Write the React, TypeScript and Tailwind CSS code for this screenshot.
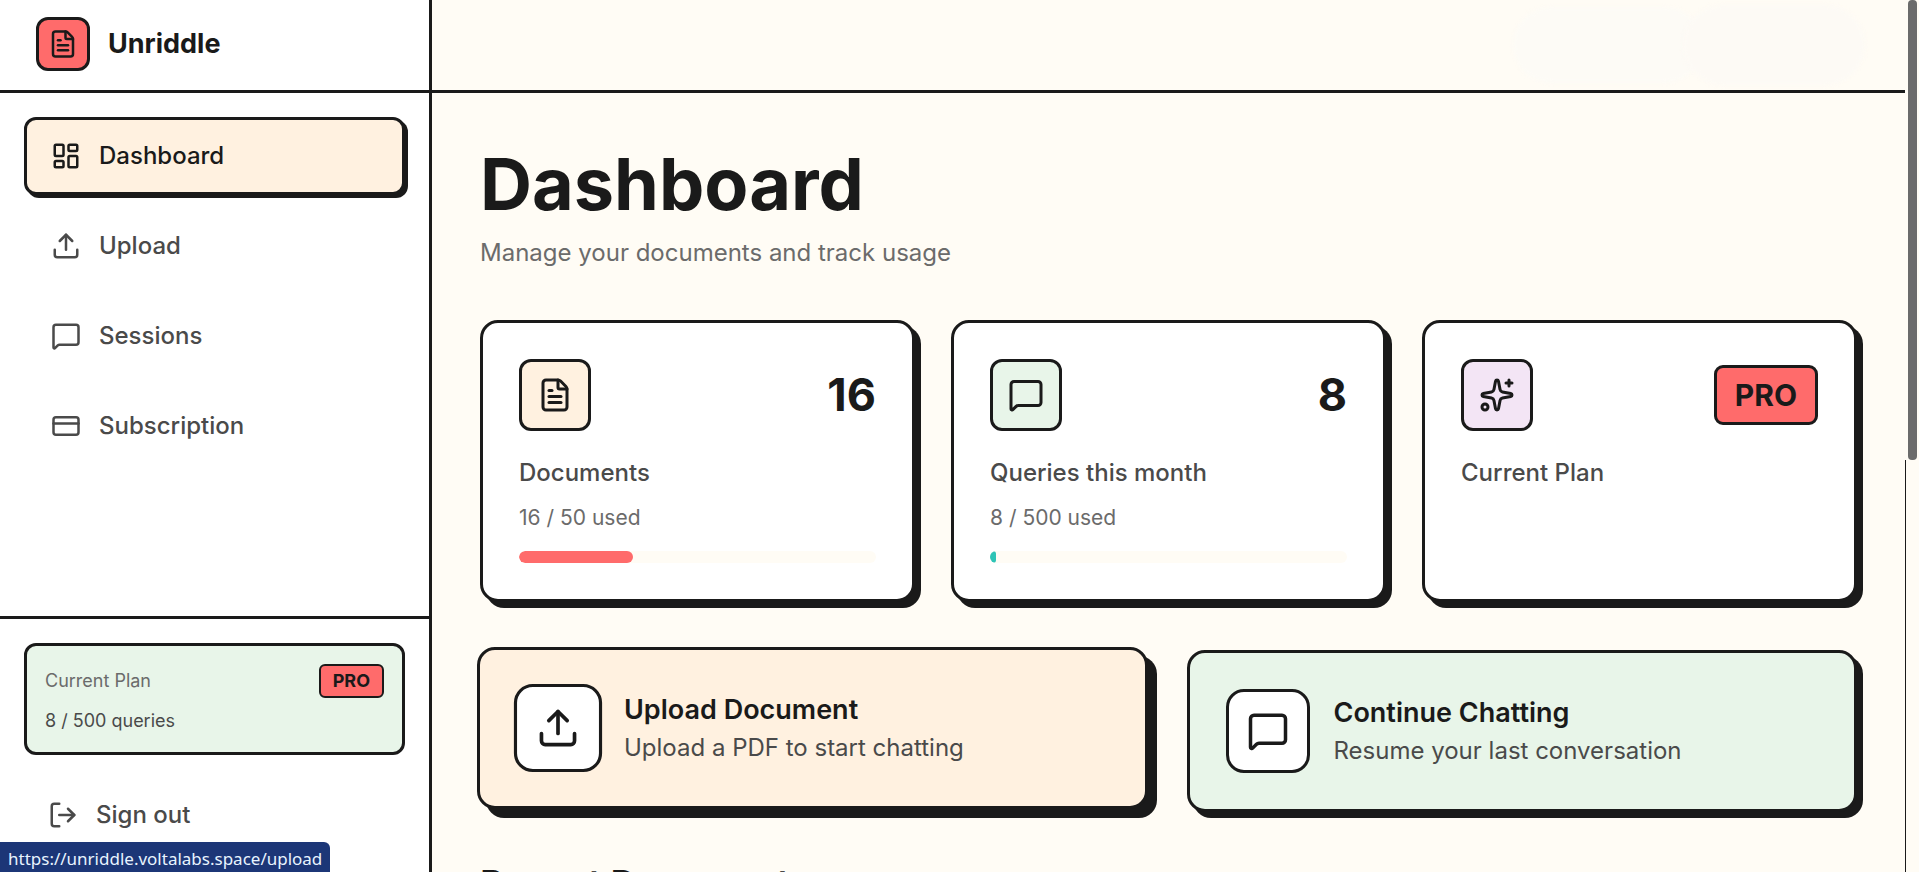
import { FC, ReactNode } from "react";
import {
  CreditCard,
  FileText,
  LayoutDashboard,
  LogOut,
  LucideIcon,
  MessageSquare,
  Sparkles,
  Upload,
} from "lucide-react";
import clsx from "clsx";

const navItems: { label: string; href: string; icon: LucideIcon; active?: boolean }[] = [
  { label: "Dashboard", href: "#dashboard", icon: LayoutDashboard, active: true },
  { label: "Upload", href: "#upload", icon: Upload },
  { label: "Sessions", href: "#sessions", icon: MessageSquare },
  { label: "Subscription", href: "#subscription", icon: CreditCard },
];

const Sidebar: FC = () => (
  <aside className="flex w-[432px] shrink-0 flex-col border-r-3 border-[#1a1a1a] bg-white">
    <div className="flex h-[93px] shrink-0 items-center gap-[18px] border-b-3 border-[#1a1a1a] px-9 pb-0.5">
      <div className="flex size-[54px] items-center justify-center rounded-xl border-3 border-[#1a1a1a] bg-[#ff6b6b]">
        <FileText className="size-[30px]" />
      </div>
      <span className="text-[27px] leading-9 font-bold">Unriddle</span>
    </div>

    <nav className="flex flex-1 flex-col gap-3 p-6">
      {navItems.map(({ label, href, icon: ItemIcon, active }) => (
        <a
          key={label}
          href={href}
          className={clsx(
            "flex h-[78px] items-center gap-[18px] rounded-xl border-3 px-6 text-2xl leading-9 font-medium",
            active
              ? "border-[#1a1a1a] bg-[#fff1e0] shadow-[3px_3px_0_#1a1a1a]"
              : "border-transparent text-[#4a4a4a]",
          )}
        >
          <ItemIcon className="size-[30px]" />
          {label}
        </a>
      ))}
    </nav>

    <div className="border-t-3 border-[#1a1a1a] px-6 pt-6 pb-[21px]">
      <div className="rounded-xl border-3 border-[#1a1a1a] bg-[#e8f5e9] p-[18px] text-lg">
        <div className="mb-[10px] flex items-center justify-between leading-7">
          <span className="text-[#6b6b6b]">Current Plan</span>
          <span className="rounded-md border-2 border-[#1a1a1a] bg-[#ff6b6b] px-3 py-px font-bold">PRO</span>
        </div>
        <p className="leading-[26px] text-[#4a4a4a]">8 / 500 queries</p>
      </div>
      <button
        type="button"
        className="mt-6 flex h-[72px] w-full items-center gap-[18px] px-6 text-2xl leading-9 font-medium text-[#4a4a4a]"
      >
        <LogOut className="size-[30px]" />
        Sign out
      </button>
    </div>
  </aside>
);

type StatCardProps = {
  icon: LucideIcon;
  iconClassName: string;
  label: string;
  value: ReactNode;
  used?: number;
  limit?: number;
  barClassName?: string;
};

const StatCard: FC<StatCardProps> = ({ icon: CardIcon, iconClassName, label, value, used, limit, barClassName }) => (
  <section className="rounded-[18px] border-3 border-[#1a1a1a] bg-white p-9 shadow-[6px_6px_0_#1a1a1a]">
    <div className="mb-6 flex items-center justify-between">
      <div
        className={clsx(
          "flex size-[72px] items-center justify-center rounded-xl border-3 border-[#1a1a1a]",
          iconClassName,
        )}
      >
        <CardIcon className="size-9" />
      </div>
      {value}
    </div>
    <h2 className="text-2xl leading-9 font-medium text-[#4a4a4a]">{label}</h2>
    {used !== undefined && limit !== undefined && (
      <>
        <p className="mt-3 text-[21px] leading-[30px] text-[#6b6b6b]">
          {used} / {limit} used
        </p>
        <div className="mt-[18px] h-3 overflow-hidden rounded-full bg-[#fffcf5]">
          <div className={clsx("h-full rounded-full", barClassName)} style={{ width: `${(used / limit) * 100}%` }} />
        </div>
      </>
    )}
  </section>
);

type ActionCardProps = {
  icon: LucideIcon;
  title: string;
  description: string;
  href: string;
  className: string;
  raised?: boolean;
};

const ActionCard: FC<ActionCardProps> = ({ icon: CardIcon, title, description, href, className, raised }) => (
  <a
    href={href}
    className={clsx(
      "flex items-center gap-6 rounded-[18px] border-3 border-[#1a1a1a] p-9",
      raised ? "-translate-x-[3px] -translate-y-[3px] shadow-[9px_9px_0_#1a1a1a]" : "shadow-[6px_6px_0_#1a1a1a]",
      className,
    )}
  >
    <div
      className={clsx(
        "flex size-[84px] shrink-0 items-center justify-center rounded-[18px] border-3 border-[#1a1a1a] bg-white",
        raised && "scale-105",
      )}
    >
      <CardIcon className="size-[42px]" />
    </div>
    <div>
      <h3 className="text-[27px] leading-10 font-semibold">{title}</h3>
      <p className="text-2xl leading-9 text-[#4a4a4a]">{description}</p>
    </div>
  </a>
);

export default function App() {
  return (
    <div className="relative flex h-screen overflow-hidden bg-[#fffcf5] font-['Inter','Liberation_Sans',sans-serif] text-[#1a1a1a]">
      <Sidebar />

      <div className="min-w-0 flex-1 overflow-hidden">
        <header className="flex h-[93px] items-center justify-end border-b-3 border-[#1a1a1a] px-10">
          <div className="h-[76px] w-[190px] rounded-full bg-[#fdfbf6] blur-[2px]" />
          <div className="-ml-5 h-20 w-[182px] rounded-full bg-[#fdfaf5] blur-[2px]" />
        </header>

        <main className="px-12 py-12">
          <h1 className="text-[72px] leading-[86px] font-bold">Dashboard</h1>
          <p className="mt-1.5 text-2xl leading-[39px] text-[#6b6b6b]">Manage your documents and track usage</p>

          <div className="mt-12 grid grid-cols-3 gap-9">
            <StatCard
              icon={FileText}
              iconClassName="bg-[#fff1e0]"
              label="Documents"
              value={<span className="text-[45px] leading-[54px] font-bold">16</span>}
              used={16}
              limit={50}
              barClassName="bg-[#ff6b6b]"
            />
            <StatCard
              icon={MessageSquare}
              iconClassName="bg-[#e8f5e9]"
              label="Queries this month"
              value={<span className="text-[45px] leading-[54px] font-bold">8</span>}
              used={8}
              limit={500}
              barClassName="bg-[#2ec4b6]"
            />
            <StatCard
              icon={Sparkles}
              iconClassName="bg-[#f3e5f5]"
              label="Current Plan"
              value={
                <span className="rounded-[9px] border-3 border-[#1a1a1a] bg-[#ff6b6b] px-[18px] py-[9px] text-3xl leading-9 font-bold">
                  PRO
                </span>
              }
            />
          </div>

          <div className="mt-12 grid grid-cols-2 gap-9">
            <ActionCard
              icon={Upload}
              title="Upload Document"
              description="Upload a PDF to start chatting"
              href="#upload"
              className="bg-[#fff1e0]"
              raised
            />
            <ActionCard
              icon={MessageSquare}
              title="Continue Chatting"
              description="Resume your last conversation"
              href="#sessions"
              className="bg-[#e8f5e9]"
            />
          </div>

          <h2 className="mt-12 text-4xl leading-[46px] font-semibold">Recent Documents</h2>
        </main>
      </div>

      {/* scroll bar */}
      <div className="flex w-[14px] shrink-0 flex-col">
        <div className="ml-[3px] h-[460px] w-[9px] rounded-sm bg-[#6b6b6b]" />
        <div className="flex-1 border-l border-[#1a1a1a]" />
      </div>

      {/* link target shown by the browser */}
      <div className="absolute bottom-0 left-0 rounded-tr-md bg-[#1c3677] px-2 pt-[3px] font-['Noto_Sans',sans-serif] text-[17px] leading-[27px] text-[#e8f4ff]">
        https://unriddle.voltalabs.space/upload
      </div>
    </div>
  );
}
